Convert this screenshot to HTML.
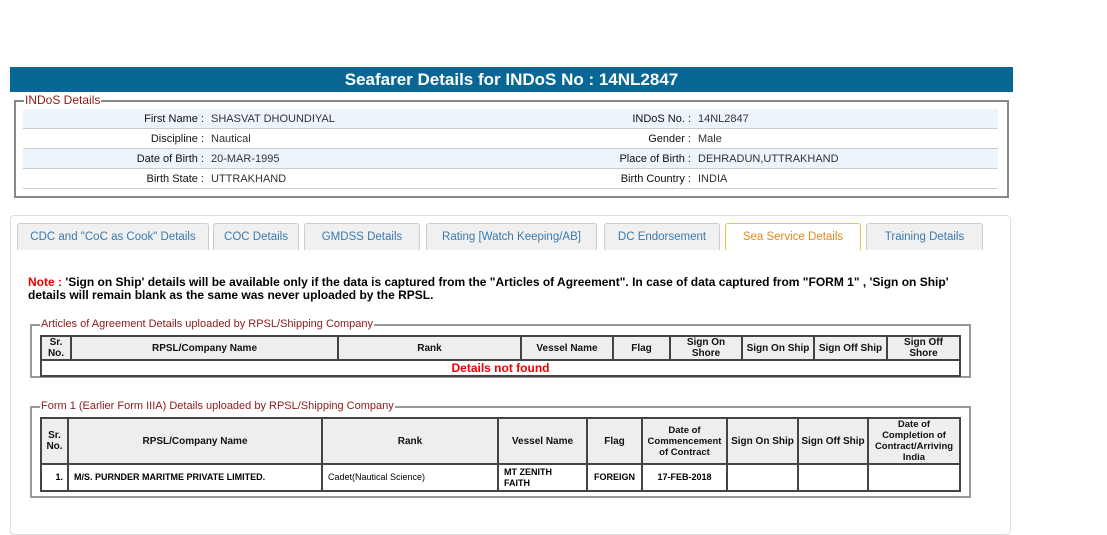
<!DOCTYPE html>
<html><head><meta charset="utf-8"><style>
*{box-sizing:border-box;margin:0;padding:0}
body{width:1107px;height:522px;background:#fff;font-family:"Liberation Sans",sans-serif;position:relative;overflow:hidden}
.abs{position:absolute}
.title{left:10px;top:67px;width:1003px;height:25px;background:#086795;color:#fff;font-weight:bold;font-size:17px;text-align:center;line-height:25px}
.fs{border:2px solid #888;}
.lg{position:absolute;background:#fff;color:#8b1a1a;font-size:12px;padding:0 1px;line-height:12px;white-space:nowrap}
.row{position:absolute;left:23px;width:975px;height:20px;border-bottom:1px solid #ccc;font-size:11px;color:#333;line-height:20px}
.row.b{background:#eef4fc}
.l{position:absolute;text-align:right;color:#111;white-space:nowrap}
.l.a{right:794px}.l.c{right:307px}
.v{position:absolute;white-space:nowrap}
.panel{left:10px;top:215px;width:1001px;height:320px;border:1px solid #ddd;border-radius:4px}
.tab{position:absolute;top:223px;height:27px;border:1px solid #ccc;border-bottom:none;border-radius:3px 3px 0 0;background:#f0f0f0;color:#3a7bb0;text-align:center;line-height:27px;font-size:11.5px;white-space:nowrap}
.tab.act{background:#fff;color:#e08a1e;border-color:#f0c040}
.note{left:28px;top:276px;width:942px;font-weight:bold;font-size:12px;line-height:13px;color:#000}
table{border-collapse:collapse;position:absolute;table-layout:fixed;font-size:10px;font-weight:bold}
td,th{border:2px solid #444;text-align:center;line-height:11px;padding:0;white-space:nowrap}
th{background:#eee;color:#111}
</style></head><body>
<div class="abs title">Seafarer Details for INDoS No : 14NL2847</div>
<div class="abs fs" style="left:14px;top:100px;width:995px;height:98px"></div>
<div class="lg" style="left:24px;top:94px">INDoS Details</div>
<div class="row b" style="top:109px"><span class="l a">First Name :</span><span class="v" style="left:188px">SHASVAT DHOUNDIYAL</span><span class="l c">INDoS No. :</span><span class="v" style="left:675px">14NL2847</span></div>
<div class="row" style="top:129px"><span class="l a">Discipline :</span><span class="v" style="left:188px">Nautical</span><span class="l c">Gender :</span><span class="v" style="left:675px">Male</span></div>
<div class="row b" style="top:149px"><span class="l a">Date of Birth :</span><span class="v" style="left:188px">20-MAR-1995</span><span class="l c">Place of Birth :</span><span class="v" style="left:675px">DEHRADUN,UTTRAKHAND</span></div>
<div class="row" style="top:169px"><span class="l a">Birth State :</span><span class="v" style="left:188px">UTTRAKHAND</span><span class="l c">Birth Country :</span><span class="v" style="left:675px">INDIA</span></div>

<div class="abs panel"></div>
<div class="tab" style="left:17px;width:192px">CDC and "CoC as Cook" Details</div>
<div class="tab" style="left:213px;width:86px">COC Details</div>
<div class="tab" style="left:304px;width:116px">GMDSS Details</div>
<div class="tab" style="left:426px;width:171px">Rating [Watch Keeping/AB]</div>
<div class="tab" style="left:604px;width:116px">DC Endorsement</div>
<div class="tab act" style="left:725px;width:136px">Sea Service Details</div>
<div class="tab" style="left:866px;width:117px">Training Details</div>

<div class="abs note"><span style="color:#e00">Note : </span>'Sign on Ship' details will be available only if the data is captured from the "Articles of Agreement". In case of data captured from "FORM 1" , 'Sign on Ship' details will remain blank as the same was never uploaded by the RPSL.</div>

<div class="abs fs" style="left:30px;top:324px;width:941px;height:54px;border-color:#999"></div>
<div class="lg" style="left:40px;top:318px;font-size:11px">Articles of Agreement Details uploaded by RPSL/Shipping Company</div>
<table style="left:40px;top:335px;width:921px">
<colgroup><col style="width:30px"><col style="width:267px"><col style="width:183px"><col style="width:92px"><col style="width:57px"><col style="width:72px"><col style="width:72px"><col style="width:73px"><col></colgroup>
<tr style="height:24px"><th>Sr.<br>No.</th><th>RPSL/Company Name</th><th>Rank</th><th>Vessel Name</th><th>Flag</th><th>Sign On<br>Shore</th><th>Sign On Ship</th><th>Sign Off Ship</th><th>Sign Off<br>Shore</th></tr>
<tr style="height:16px"><td colspan="9" style="color:#e00;font-size:12px">Details not found</td></tr>
</table>

<div class="abs fs" style="left:30px;top:406px;width:941px;height:92px;border-color:#999"></div>
<div class="lg" style="left:40px;top:400px;font-size:11px">Form 1 (Earlier Form IIIA) Details uploaded by RPSL/Shipping Company</div>
<table style="left:40px;top:417px;width:921px">
<colgroup><col style="width:27px"><col style="width:254px"><col style="width:176px"><col style="width:89px"><col style="width:55px"><col style="width:85px"><col style="width:71px"><col style="width:70px"><col></colgroup>
<tr style="height:46px"><th>Sr.<br>No.</th><th>RPSL/Company Name</th><th>Rank</th><th>Vessel Name</th><th>Flag</th><th style="font-size:9.5px">Date of<br>Commencement<br>of Contract</th><th>Sign On Ship</th><th>Sign Off Ship</th><th style="font-size:9.5px">Date of<br>Completion of<br>Contract/Arriving<br>India</th></tr>
<tr style="height:27px;font-size:9px"><td style="text-align:right;padding-right:4px">1.</td><td style="text-align:left;padding-left:5px">M/S. PURNDER MARITME PRIVATE LIMITED.</td><td style="text-align:left;padding-left:5px;font-weight:normal">Cadet(Nautical Science)</td><td style="text-align:left;padding-left:5px">MT ZENITH<br>FAITH</td><td>FOREIGN</td><td>17-FEB-2018</td><td></td><td></td><td></td></tr>
</table>
</body></html>
